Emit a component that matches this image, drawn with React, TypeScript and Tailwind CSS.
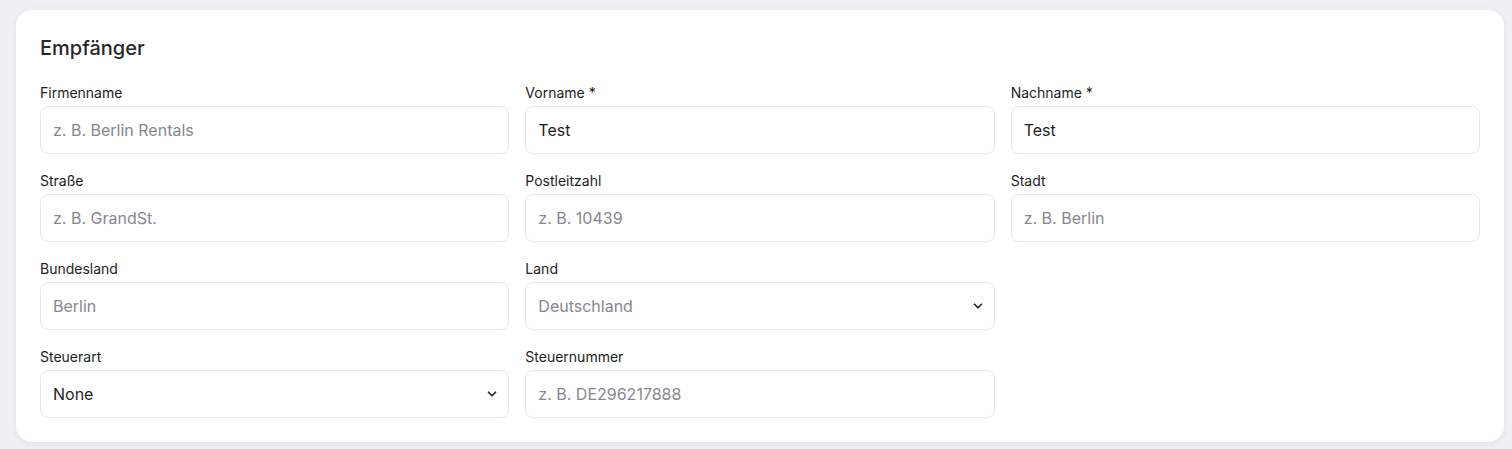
import { ChevronDown } from 'lucide-react';

interface Field {
  label: string;
  placeholder?: string;
  value?: string;
  required?: boolean;
  type?: 'input' | 'select';
  options?: string[];
}

const fields: (Field | null)[] = [
  { label: 'Firmenname', placeholder: 'z. B. Berlin Rentals' },
  { label: 'Vorname', value: 'Test', required: true },
  { label: 'Nachname', value: 'Test', required: true },
  { label: 'Straße', placeholder: 'z. B. GrandSt.' },
  { label: 'Postleitzahl', placeholder: 'z. B. 10439' },
  { label: 'Stadt', placeholder: 'z. B. Berlin' },
  { label: 'Bundesland', placeholder: 'Berlin' },
  { label: 'Land', type: 'select', placeholder: 'Deutschland', options: ['Deutschland', 'Österreich', 'Schweiz'] },
  null,
  { label: 'Steuerart', type: 'select', value: 'None', options: ['None', 'USt', 'VAT'] },
  { label: 'Steuernummer', placeholder: 'z. B. DE296217888' },
];

const FormField = ({ field }: { field: Field }) => {
  const boxClass =
    'h-12 w-full rounded-lg border border-[#e6e7eb] bg-white px-3 text-base text-[#1f1f23] outline-none placeholder:text-[#85888f]';

  return (
    <div className="flex flex-col">
      <label className="mb-[3px] h-5 text-sm font-normal leading-5 text-[#1d1d20]">
        {field.label}
        {field.required && ' *'}
      </label>
      {field.type === 'select' ? (
        <div className="relative">
          <select
            defaultValue={field.value ?? ''}
            className={`${boxClass} appearance-none pr-10 ${field.value ? '' : 'text-[#85888f]'}`}
          >
            {!field.value && (
              <option value="" disabled>
                {field.placeholder}
              </option>
            )}
            {field.options?.map((o) => (
              <option key={o} value={o}>
                {o}
              </option>
            ))}
          </select>
          <ChevronDown
            strokeWidth={3}
            className="pointer-events-none absolute right-[10px] top-1/2 h-[14px] w-[14px] -translate-y-1/2 text-[#26262a]"
          />
        </div>
      ) : (
        <input
          type="text"
          defaultValue={field.value}
          placeholder={field.placeholder}
          className={boxClass}
        />
      )}
    </div>
  );
};

const App = () => {
  return (
    <div
      className="min-h-screen bg-[#eef0f4] pb-[7px] pl-4 pr-2 pt-[10px]"
      style={{ fontFamily: 'Inter, "Noto Sans", sans-serif' }}
    >
      <section className="rounded-2xl bg-white p-6 shadow-[0_1px_6px_rgba(30,40,70,0.08)]">
        <h2 className="mb-[21px] text-xl font-medium leading-7 text-[#27272a]">Empfänger</h2>
        <div className="grid grid-cols-3 gap-x-4 gap-y-[17px]">
          {fields.map((f, i) => (f ? <FormField key={f.label} field={f} /> : <div key={i} />))}
        </div>
      </section>
    </div>
  );
};

export default App;
